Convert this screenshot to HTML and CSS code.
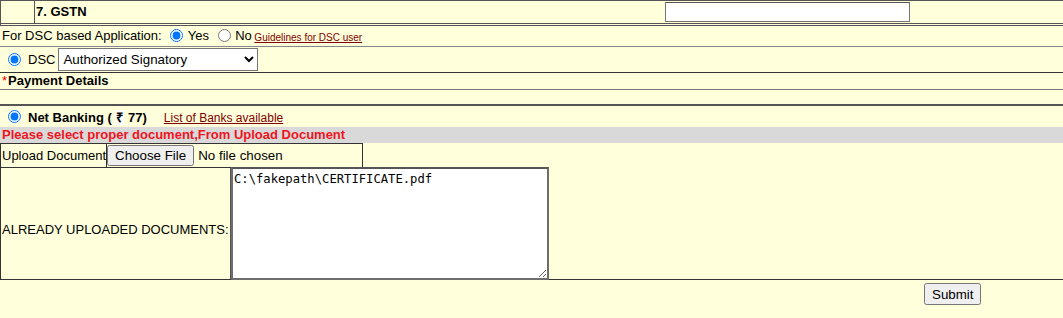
FILE: index.html
```html
<!DOCTYPE html>
<html lang="en">
<head>
    <meta charset="UTF-8">
    <meta name="viewport" content="width=device-width, initial-scale=1.0">
    <title>GSTN Application</title>
    <link rel="stylesheet" href="styles.css">
</head>
<body>
    <form class="app-form" onsubmit="return false;">
        <!-- GSTN -->
        <div class="gstn-row">
            <div class="gstn-num"></div>
            <div class="gstn-label">7. GSTN</div>
            <div class="gstn-field"><input type="text" class="gstn-input" name="gstn"></div>
        </div>

        <!-- DSC -->
        <div class="line dsc-choice">For DSC based Application: <input type="radio" name="dsc" checked> Yes <input type="radio" name="dsc"> No <a href="#" class="guide-link">Guidelines for DSC user</a></div>
        <div class="row dsc-type">
            <input type="radio" name="dsctype" checked> DSC
            <select class="signatory">
                <option>Authorized Signatory</option>
                <option>Director</option>
            </select>
        </div>

        <!-- Payment -->
        <div class="line payment-head"><span class="req">*</span>Payment Details</div>
        <div class="line payment-blank"></div>
        <div class="row netbanking">
            <input type="radio" name="pay" checked>
            <b>Net Banking ( <span class="rupee">₹</span> 77)</b>
            <a href="#" class="bank-link">List of Banks available</a>
        </div>

        <!-- Upload -->
        <div class="line alert">Please select proper document,From Upload Document</div>
        <div class="upload-row">
            <div class="upload-label">Upload Document</div>
            <div class="upload-field"><input type="file" class="file-input"></div>
        </div>
        <div class="uploaded-row">
            <div class="uploaded-label">ALREADY UPLOADED DOCUMENTS:</div>
            <div class="uploaded-field"><textarea class="uploaded-list" readonly>C:\fakepath\CERTIFICATE.pdf</textarea></div>
        </div>

        <div class="submit-row">
            <div></div>
            <div><button class="submit-btn">Submit</button></div>
        </div>
    </form>
</body>
</html>
```

FILE: styles.css
```css
body {
    margin: 0;
    background: #ffffdb;
    font-family: "Liberation Sans", Arial, sans-serif;
    font-size: 13px;
    color: #000;
}
.app-form {
    margin: 0;
}
.gstn-row {
    display: flex;
    height: 22px;
    border-top: 1px solid #555;
    border-left: 1px solid #555;
    border-bottom: 3px double #555;
}
.gstn-num {
    width: 33px;
    border-right: 1px solid #555;
}
.gstn-label {
    width: 627px;
    padding-left: 1px;
    font-weight: bold;
    line-height: 22px;
}
.gstn-field {
    display: flex;
    align-items: center;
}
.gstn-input {
    width: 243px;
    height: 16px;
    margin: 0 0 0 2px;
    padding: 1px 0;
    border: 1px solid #767676;
    border-top-color: #555;
    background: #fff;
}
.line {
    padding-left: 2px;
    white-space: nowrap;
}
.row {
    display: flex;
    align-items: center;
    padding-left: 2px;
}
.dsc-choice {
    height: 20px;
    line-height: 20px;
    border-bottom: 1px solid #888;
}
.dsc-choice input[type=radio] {
    margin: 0 1px 0 5px;
    vertical-align: -2px;
}
.guide-link {
    font-size: 10px;
    color: #800000;
    margin-left: -1px;
    vertical-align: -1px;
}
.dsc-type {
    height: 25px;
    border-bottom: 1px solid #333;
}
.dsc-type input[type=radio] {
    margin: 0 7px 0 6px;
}
.signatory {
    width: 200px;
    height: 23px;
    margin-left: 3px;
    font-family: "Liberation Sans", Arial, sans-serif;
    font-size: 13.33px;
    border: 1px solid #767676;
    border-radius: 0;
    background: #fff;
}
.payment-head {
    height: 16px;
    line-height: 16px;
    font-weight: bold;
    border-bottom: 1px solid #777;
}
.req {
    color: #e00;
    font-weight: normal;
    margin-right: 1px;
}
.payment-blank {
    height: 14px;
    border-bottom: 2px solid #555;
}
.netbanking {
    height: 21px;
}
.netbanking input[type=radio] {
    margin: 0 7px 0 6px;
}
.rupee {
    background: #fff;
    padding: 0 1px;
}
.bank-link {
    font-size: 12px;
    color: #800000;
    margin-left: 17px;
    margin-top: 2px;
}
.alert {
    height: 16px;
    line-height: 16px;
    background: #d9d9d9;
    color: #f0141e;
    font-weight: bold;
}
.upload-row {
    display: flex;
    width: 361px;
    height: 23px;
    border: 1px solid #333;
}
.upload-label {
    flex: none;
    white-space: nowrap;
    padding: 0 0 0 1px;
    line-height: 23px;
    border-right: 1px solid #333;
}
.upload-field {
    display: flex;
    align-items: center;
}
.file-input {
    font-family: "Liberation Sans", Arial, sans-serif;
    font-size: 13.33px;
}
.uploaded-row {
    display: flex;
    height: 111px;
    border-left: 1px solid #333;
    border-bottom: 1px solid #333;
}
.uploaded-label {
    width: 228px;
    display: flex;
    align-items: center;
    padding: 12px 0 0 1px;
    white-space: nowrap;
    border-right: 1px solid #555;
}
.uploaded-field {
    display: flex;
    align-items: flex-start;
}
.uploaded-list {
    box-sizing: border-box;
    width: 318px;
    height: 113px;
    margin: -1px 0 0 0;
    padding: 3px 1px 2px 1px;
    border: 2px solid #6e6e6e;
    border-top-color: #555;
    font-family: "DejaVu Sans Mono", monospace;
    font-size: 12.2px;
    background: #fff;
}
.submit-row {
    display: grid;
    grid-template-columns: 924px auto;
    padding-top: 3px;
}
.submit-btn {
    font-family: "Liberation Sans", Arial, sans-serif;
    font-size: 13.33px;
    height: 22px;
    padding: 0 6px;
}
```
